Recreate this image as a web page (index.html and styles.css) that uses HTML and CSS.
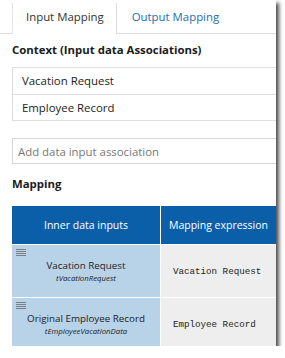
FILE: index.html
```html
<!DOCTYPE html>
<html lang="en">
<head>
  <meta charset="UTF-8" />
  <title>Input Mapping</title>
  <link rel="stylesheet" href="styles.css">
</head>
<body>

<div class="panel">
  <div class="tabs">
    <div class="tab active">Input Mapping</div>
    <div class="tab">Output Mapping</div>
  </div>

  <div class="content">
    <h3 class="title">Context (Input data Associations)</h3>
    <ul class="list">
      <li>Vacation Request</li>
      <li>Employee Record</li>
    </ul>

    <input class="add-input" type="text" placeholder="Add data input association" />

    <h3 class="title title-mapping">Mapping</h3>

    <div class="table">
      <div class="th">Inner data inputs</div>
      <div class="th">Mapping expression</div>

      <div class="cell-name">
        <svg class="handle" width="10" height="7" viewBox="0 0 10 7"><path d="M0 0.5h10M0 2.5h10M0 4.5h10M0 6.5h10" stroke="#7a7f86" stroke-width="1"/></svg>
        <div class="name">Vacation Request</div>
        <div class="type">tVacationRequest</div>
      </div>
      <div class="cell-expr">Vacation Request</div>

      <div class="cell-name">
        <svg class="handle" width="10" height="7" viewBox="0 0 10 7"><path d="M0 0.5h10M0 2.5h10M0 4.5h10M0 6.5h10" stroke="#7a7f86" stroke-width="1"/></svg>
        <div class="name">Original Employee Record</div>
        <div class="type">tEmployeeVacationData</div>
      </div>
      <div class="cell-expr">Employee Record</div>
    </div>
  </div>
</div>

</body>
</html>
```

FILE: styles.css
```css
* {
  box-sizing: border-box;
}

html, body {
  margin: 0;
  padding: 0;
  background: #fff;
  font-family: 'Open Sans', sans-serif;
  color: #222;
}

.panel {
  width: 276px;
  height: 346px;
  background: #fff;
  overflow: hidden;
  box-shadow: 3px 3px 4px rgba(0, 0, 0, 0.7);
}

.tabs {
  display: flex;
  margin-top: 3px;
  padding-left: 12px;
  border-bottom: 1px solid #ddd;
  height: 31px;
}

.tab {
  height: 30px;
  line-height: 28px;
  padding: 0 14px 0 15px;
  font-size: 11.4px;
  color: #1d6db3;
}

.tab.active {
  color: #333;
  background: #fff;
  height: 31px;
  border-left: 1px solid #e2e2e2;
  border-right: 1px solid #dcdcdc;
  padding: 0 12px 0 13px;
}

.content {
  padding-left: 12px;
}

.title {
  margin: 8px 0 0;
  font-size: 11.4px;
  line-height: 16px;
  font-weight: 700;
  color: #1b1b1b;
}

.title-mapping {
  margin-top: 12px;
}

.list {
  list-style: none;
  margin: 9px 0 0;
  padding: 0;
  border: 1px solid #ddd;
  border-right: none;
}

.list li {
  height: 26px;
  line-height: 26px;
  padding-left: 9px;
  font-size: 11.4px;
  color: #222;
}

.list li + li {
  border-top: 1px solid #ddd;
}

.add-input {
  display: block;
  width: 100%;
  height: 26px;
  margin: 17px 0 0;
  padding: 0 0 0 5px;
  border: 1px solid #d6d6d6;
  border-right: none;
  font-family: 'Open Sans', sans-serif;
  font-size: 11.4px;
  outline: none;
}

.add-input::placeholder {
  color: #777;
}

.table {
  display: grid;
  grid-template-columns: 148px 1fr;
  grid-auto-rows: 52px;
  grid-template-rows: 38px;
  gap: 1px;
  margin-top: 14px;
  background: #fff;
}

.th {
  background: #0b5fa9;
  color: #fff;
  font-size: 10.5px;
  display: flex;
  align-items: center;
  justify-content: center;
}

.cell-name {
  background: #b8d2e8;
  padding: 4px 4px 0;
  text-align: center;
  color: #222;
}

.handle {
  display: block;
}

.name {
  margin-top: 3px;
  font-size: 9.8px;
  line-height: 14px;
}

.type {
  font-size: 7.8px;
  line-height: 11px;
  font-style: italic;
}

.cell-expr {
  background: #eee;
  padding-left: 12px;
  display: flex;
  align-items: center;
  font-family: 'Liberation Mono', monospace;
  font-size: 9.2px;
  color: #222;
}
```
